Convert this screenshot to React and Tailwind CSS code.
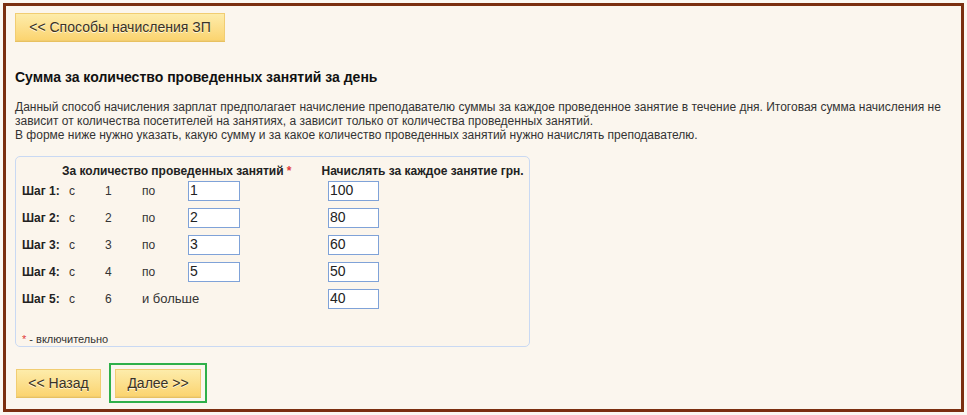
import React from 'react';

const steps = [
  { n: 1, from: '1', to: '1', sum: '100' },
  { n: 2, from: '2', to: '2', sum: '80' },
  { n: 3, from: '3', to: '3', sum: '60' },
  { n: 4, from: '4', to: '5', sum: '50' },
  { n: 5, from: '6', to: null, sum: '40' },
];

const btn =
  'h-[28px] px-0 whitespace-nowrap text-center text-[14px] text-[#3a3226] border border-[#f1cd72] bg-gradient-to-b from-[#fdecaa] to-[#fbd470] shadow-[0_1px_0_#e8c160] [text-shadow:0_1px_0_#fff6d8]';

const App = () => {
  return (
    <div className="w-[967px] h-[415px] bg-[#fbf8f2] p-[3px] font-['Liberation_Sans',Arial,sans-serif] text-[#333]">
      <div className="h-[409px] border-[3px] border-[#7b2f10] bg-[#fbf6ee] pl-[9px] pt-[7px]">
        <button className={btn + ' w-[210px]'}>&lt;&lt; Способы начисления ЗП</button>

        <h2 className="mt-[28px] text-[14px] leading-[16px] font-bold text-[#111]">
          Сумма за количество проведенных занятий за день
        </h2>

        <p className="mt-[15px] pr-[8px] text-[12px] leading-[14px]">
          Данный способ начисления зарплат предполагает начисление преподавателю суммы за каждое проведенное занятие в течение дня. Итоговая сумма начисления не зависит от количества посетителей на занятиях, а зависит только от количества проведенных занятий.
          <br />
          В форме ниже нужно указать, какую сумму и за какое количество проведенных занятий нужно начислять преподавателю.
        </p>

        <div className="mt-[14px] w-[515px] h-[191px] border border-[#c9d9f3] rounded-[5px] bg-[#fbf5ec] pl-[6px] pt-[6px] text-[12px]">
          <div className="flex leading-[16px] font-bold text-[#222]">
            <span className="ml-[40px]">
              За количество проведенных занятий <span className="text-[#e03a3a]">*</span>
            </span>
            <span className="ml-[30px]">Начислять за каждое занятие грн.</span>
          </div>

          <div className="-mt-[2px]">
            {steps.map((s) => (
              <div
                key={s.n}
                className="grid grid-cols-[47px_36px_37px_46px_140px_60px] items-center h-[27px]"
              >
                <span className="font-bold text-[#222]">Шаг {s.n}:</span>
                <span>с</span>
                <span>{s.from}</span>
                {s.to ? (
                  <>
                    <span>по</span>
                    <input
                      readOnly
                      value={s.to}
                      className="w-[52px] h-[20px] border border-[#7fa2d8] bg-white px-[1px] text-[14px] text-[#222] outline-none"
                    />
                  </>
                ) : (
                  <span className="col-span-2 text-[13px]">и больше</span>
                )}
                <input
                  readOnly
                  value={s.sum}
                  className="w-[51px] h-[20px] border border-[#7fa2d8] bg-white px-[1px] text-[14px] text-[#222] outline-none"
                />
              </div>
            ))}
          </div>

          <div className="mt-[20px] text-[11px] leading-[14px]">
            <span className="text-[#e03a3a]">*</span> - включительно
          </div>
        </div>

        <div className="mt-[16px] flex items-center gap-[8px] ml-[1px]">
          <button className={btn + ' w-[85px]'}>&lt;&lt; Назад</button>
          <div className="border-2 border-[#2fb04a] p-[4px]">
            <button className={btn + ' w-[86px]'}>Далее &gt;&gt;</button>
          </div>
        </div>
      </div>
    </div>
  );
};

export default App;
